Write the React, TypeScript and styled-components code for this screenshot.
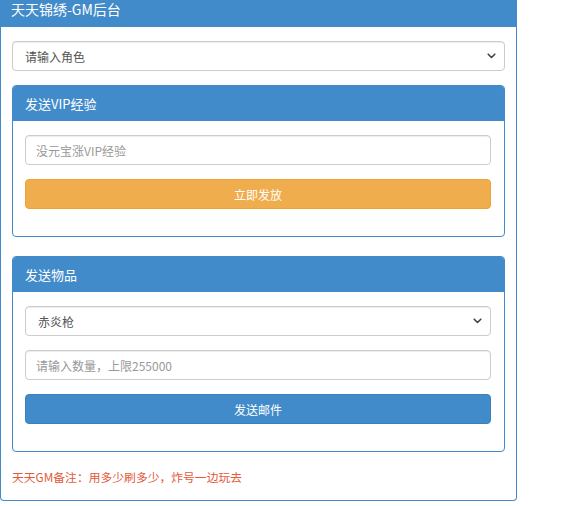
import React from 'react';
import styled, { createGlobalStyle } from 'styled-components';

const GlobalStyle = createGlobalStyle`
  html, body {
    margin: 0;
    padding: 0;
    background: #fff;
    overflow: hidden;
  }
  body {
    font-family: "Noto Sans CJK SC", "Noto Sans", "Liberation Sans", sans-serif;
  }
  * {
    box-sizing: border-box;
  }
`;

const OuterPanel = styled.div`
  width: 517px;
  border: 1px solid #428bca;
  border-top: none;
  border-radius: 0 0 4px 4px;
  background: #fff;
`;

const OuterHeading = styled.div`
  height: 27px;
  background: #428bca;
  color: #fff;
  font-size: 14px;
  line-height: 19px;
  padding: 0 10px;
`;

const OuterBody = styled.div`
  padding: 14px 11px 15px 11px;
  display: flex;
  flex-direction: column;
`;

const Panel = styled.div<{ $gap?: number }>`
  margin-top: ${(p) => p.$gap ?? 0}px;
  border: 1px solid #428bca;
  border-radius: 4px;
  overflow: hidden;
`;

const PanelHeading = styled.div`
  height: 35px;
  background: #428bca;
  color: #fff;
  font-size: 13px;
  display: flex;
  align-items: center;
  padding: 0 12px;
`;

const PanelBody = styled.div`
  padding: 14px 13px 27px 12px;
  display: flex;
  flex-direction: column;
  gap: 14px;
`;

const SelectWrap = styled.div`
  position: relative;
  height: 30px;
`;

const Select = styled.select`
  appearance: none;
  width: 100%;
  height: 30px;
  border: 1px solid #ccc;
  border-radius: 4px;
  background: #fff;
  color: #555;
  font-family: inherit;
  font-size: 12px;
  padding: 0 12px;
  box-shadow: inset 0 1px 1px rgba(0, 0, 0, 0.075);
  outline: none;
`;

const Chevron = styled.svg`
  position: absolute;
  right: 9px;
  top: 12px;
  pointer-events: none;
`;

const Input = styled.input`
  width: 100%;
  height: 30px;
  border: 1px solid #ccc;
  border-radius: 4px;
  background: #fff;
  color: #555;
  font-family: inherit;
  font-size: 12px;
  padding: 0 10px;
  box-shadow: inset 0 1px 1px rgba(0, 0, 0, 0.075);
  outline: none;
  &::placeholder {
    color: #999;
  }
`;

const Button = styled.button<{ $variant: 'warning' | 'primary' }>`
  width: 100%;
  height: 30px;
  border-radius: 4px;
  border: 1px solid ${(p) => (p.$variant === 'warning' ? '#eea236' : '#3a7fbe')};
  background: ${(p) => (p.$variant === 'warning' ? '#f0ad4e' : '#428bca')};
  color: #fff;
  font-family: inherit;
  font-size: 12px;
  cursor: pointer;
`;

const Note = styled.div`
  margin-top: 16px;
  color: #e5583a;
  font-size: 11.8px;
  line-height: 17px;
`;

const ChevronIcon = () => (
  <Chevron width="9" height="6" viewBox="0 0 9 6">
    <path d="M1.2 1.2L4.5 4.5L7.8 1.2" fill="none" stroke="#444" strokeWidth={1.6} strokeLinecap="round" strokeLinejoin="round" />
  </Chevron>
);

const SelectField = ({ options }: { options: string[] }) => (
  <SelectWrap>
    <Select defaultValue={options[0]}>
      {options.map((o) => (
        <option key={o} value={o}>
          {o}
        </option>
      ))}
    </Select>
    <ChevronIcon />
  </SelectWrap>
);

const App = () => (
  <>
    <GlobalStyle />
    <OuterPanel>
      <OuterHeading>天天锦绣-GM后台</OuterHeading>
      <OuterBody>
        <SelectField options={['请输入角色']} />
        <Panel $gap={14}>
          <PanelHeading>发送VIP经验</PanelHeading>
          <PanelBody>
            <Input placeholder="没元宝涨VIP经验" />
            <Button $variant="warning">立即发放</Button>
          </PanelBody>
        </Panel>
        <Panel $gap={19}>
          <PanelHeading>发送物品</PanelHeading>
          <PanelBody>
            <SelectField options={['赤炎枪']} />
            <Input placeholder="请输入数量，上限255000" />
            <Button $variant="primary">发送邮件</Button>
          </PanelBody>
        </Panel>
        <Note>天天GM备注：用多少刷多少，炸号一边玩去</Note>
      </OuterBody>
    </OuterPanel>
  </>
);

export default App;
